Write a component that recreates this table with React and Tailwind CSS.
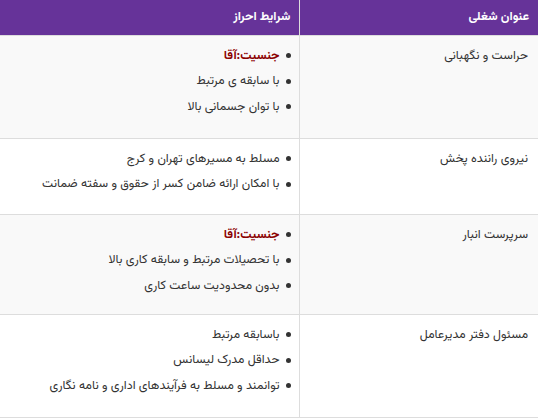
import React from 'react';

const rows = [
    {
        title: 'حراست و نگهبانی',
        items: [{ text: 'جنسیت:آقا', strong: true }, { text: 'با سابقه ی مرتبط' }, { text: 'با توان جسمانی بالا' }],
        bg: 'bg-[#f9f9f9]',
        h: 'h-[103px]',
    },
    {
        title: 'نیروی راننده پخش',
        items: [{ text: 'مسلط به مسیرهای تهران و کرج' }, { text: 'با امکان ارائه ضامن کسر از حقوق و سفته ضمانت' }],
        bg: 'bg-white',
        h: 'h-[76px]',
    },
    {
        title: 'سرپرست انبار',
        items: [{ text: 'جنسیت:آقا', strong: true }, { text: 'با تحصیلات مرتبط و سابقه کاری بالا' }, { text: 'بدون محدودیت ساعت کاری' }],
        bg: 'bg-[#f9f9f9]',
        h: 'h-[100px]',
    },
    {
        title: 'مسئول دفتر مدیرعامل',
        items: [{ text: 'باسابقه مرتبط' }, { text: 'حداقل مدرک لیسانس' }, { text: 'توانمند و مسلط به فرآیندهای اداری و نامه نگاری' }],
        bg: 'bg-white',
        h: 'h-[103px]',
    },
];

export default function App() {
    return (
        <div className="w-[542px] h-[420px] bg-white overflow-hidden" style={{ fontFamily: 'Vazirmatn, "Noto Sans Arabic", sans-serif' }}>
            <table dir="rtl" className="w-[538px] border-collapse text-[12.4px] text-[#333] table-fixed">
                <thead>
                    <tr className="h-[35px] bg-[#663399] text-white font-bold">
                        <th className="w-[239px] border border-[#ddd] border-t-0 border-r-0 px-[9px] text-right align-middle">عنوان شغلی</th>
                        <th className="border border-[#ddd] border-t-0 border-l-0 px-[8px] text-right align-middle">شرایط احراز</th>
                    </tr>
                </thead>
                <tbody>
                    {rows.map((row, i) => (
                        <tr key={i} className={`${row.bg} ${row.h}`}>
                            <td className="border border-[#ddd] border-r-0 px-[10px] pt-[9px] align-top leading-[22px]">{row.title}</td>
                            <td className="border border-[#ddd] border-l-0 pr-[8px] pt-[9px] align-top">
                                <ul className="flex flex-col gap-[3.5px]">
                                    {row.items.map((item, j) => (
                                        <li key={j} className="flex items-center gap-[6px] leading-[22px]">
                                            <span className="w-[5px] h-[5px] rounded-full bg-[#333] shrink-0" />
                                            <span className={item.strong ? 'font-bold text-[#8b0000]' : ''}>{item.text}</span>
                                        </li>
                                    ))}
                                </ul>
                            </td>
                        </tr>
                    ))}
                </tbody>
            </table>
        </div>
    );
}
